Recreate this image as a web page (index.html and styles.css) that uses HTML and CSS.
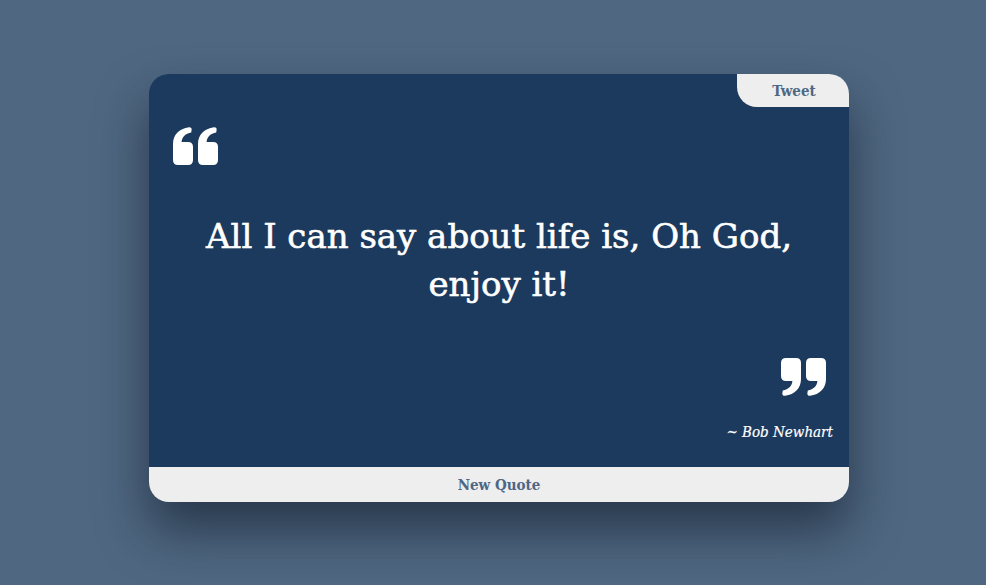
FILE: index.html
```html
<!DOCTYPE html>
<html>
<head>
<meta charset="utf-8">
<link rel="stylesheet" href="styles.css">
</head>
<body>
<div class="page">
  <div class="card">
    <div class="top">
      <a class="tweet">Tweet</a>
    </div>
    <div class="body">
      <svg class="q q-open" width="46" height="38" viewBox="0 0 46 38">
        <path d="M0 17 C0 8 6 1.5 16 0.2 Q19 0 18.6 3 L18.2 5.6 C12.5 6.6 9 10 8.6 15 L15 15 Q20 15 20 20 L20 33 Q20 38 15 38 L5 38 Q0 38 0 33 Z" fill="#fff"/>
        <path transform="translate(25 0)" d="M0 17 C0 8 6 1.5 16 0.2 Q19 0 18.6 3 L18.2 5.6 C12.5 6.6 9 10 8.6 15 L15 15 Q20 15 20 20 L20 33 Q20 38 15 38 L5 38 Q0 38 0 33 Z" fill="#fff"/>
      </svg>
      <p class="text">All I can say about life is, Oh God, enjoy it!</p>
      <svg class="q q-close" width="46" height="38" viewBox="0 0 46 38">
        <g transform="rotate(180 23 19)">
          <path d="M0 17 C0 8 6 1.5 16 0.2 Q19 0 18.6 3 L18.2 5.6 C12.5 6.6 9 10 8.6 15 L15 15 Q20 15 20 20 L20 33 Q20 38 15 38 L5 38 Q0 38 0 33 Z" fill="#fff"/>
          <path transform="translate(25 0)" d="M0 17 C0 8 6 1.5 16 0.2 Q19 0 18.6 3 L18.2 5.6 C12.5 6.6 9 10 8.6 15 L15 15 Q20 15 20 20 L20 33 Q20 38 15 38 L5 38 Q0 38 0 33 Z" fill="#fff"/>
        </g>
      </svg>
      <p class="author">~ Bob Newhart</p>
    </div>
    <a class="new">New Quote</a>
  </div>
</div>
</body>
</html>
```
FILE: styles.css
```css
html, body {
  margin: 0;
  padding: 0;
  background: #4f6781;
  height: 100%;
}
body {
  font-family: "DejaVu Serif Condensed", "DejaVu Serif", serif;
}
.page {
  padding: 74px 0 0 149px;
}
.card {
  width: 700px;
  height: 428px;
  background: #1c3a5e;
  border-radius: 20px;
  overflow: hidden;
  display: flex;
  flex-direction: column;
  box-shadow: 0 28px 50px rgba(15, 25, 40, 0.6);
}
.top {
  display: flex;
  justify-content: flex-end;
}
.tweet {
  box-sizing: border-box;
  width: 112px;
  height: 33px;
  background: #eeeeee;
  border-bottom-left-radius: 20px;
  color: #4d6785;
  font-weight: bold;
  font-size: 15px;
  display: flex;
  align-items: center;
  justify-content: center;
  padding-left: 2px;
}
.body {
  flex: 1;
  display: flex;
  flex-direction: column;
  padding: 20px 16px 0 24px;
}
.q-open {
  align-self: flex-start;
}
.text {
  margin: 47px 0 0 -8px;
  text-align: center;
  color: #fff;
  font-family: "DejaVu Serif", serif;
  font-size: 34px;
  line-height: 48px;
  padding: 0 20px;
  -webkit-text-stroke: 0.6px #fff;
}
.q-close {
  align-self: flex-end;
  margin: 50px 7px 0 0;
}
.author {
  margin: 27px 0 0 0;
  text-align: right;
  color: #fff;
  font-style: italic;
  font-size: 15px;
  -webkit-text-stroke: 0.2px #fff;
}
.new {
  height: 35px;
  background: #eeeeee;
  color: #4d6785;
  font-weight: bold;
  font-size: 15px;
  display: flex;
  align-items: center;
  justify-content: center;
}
```
